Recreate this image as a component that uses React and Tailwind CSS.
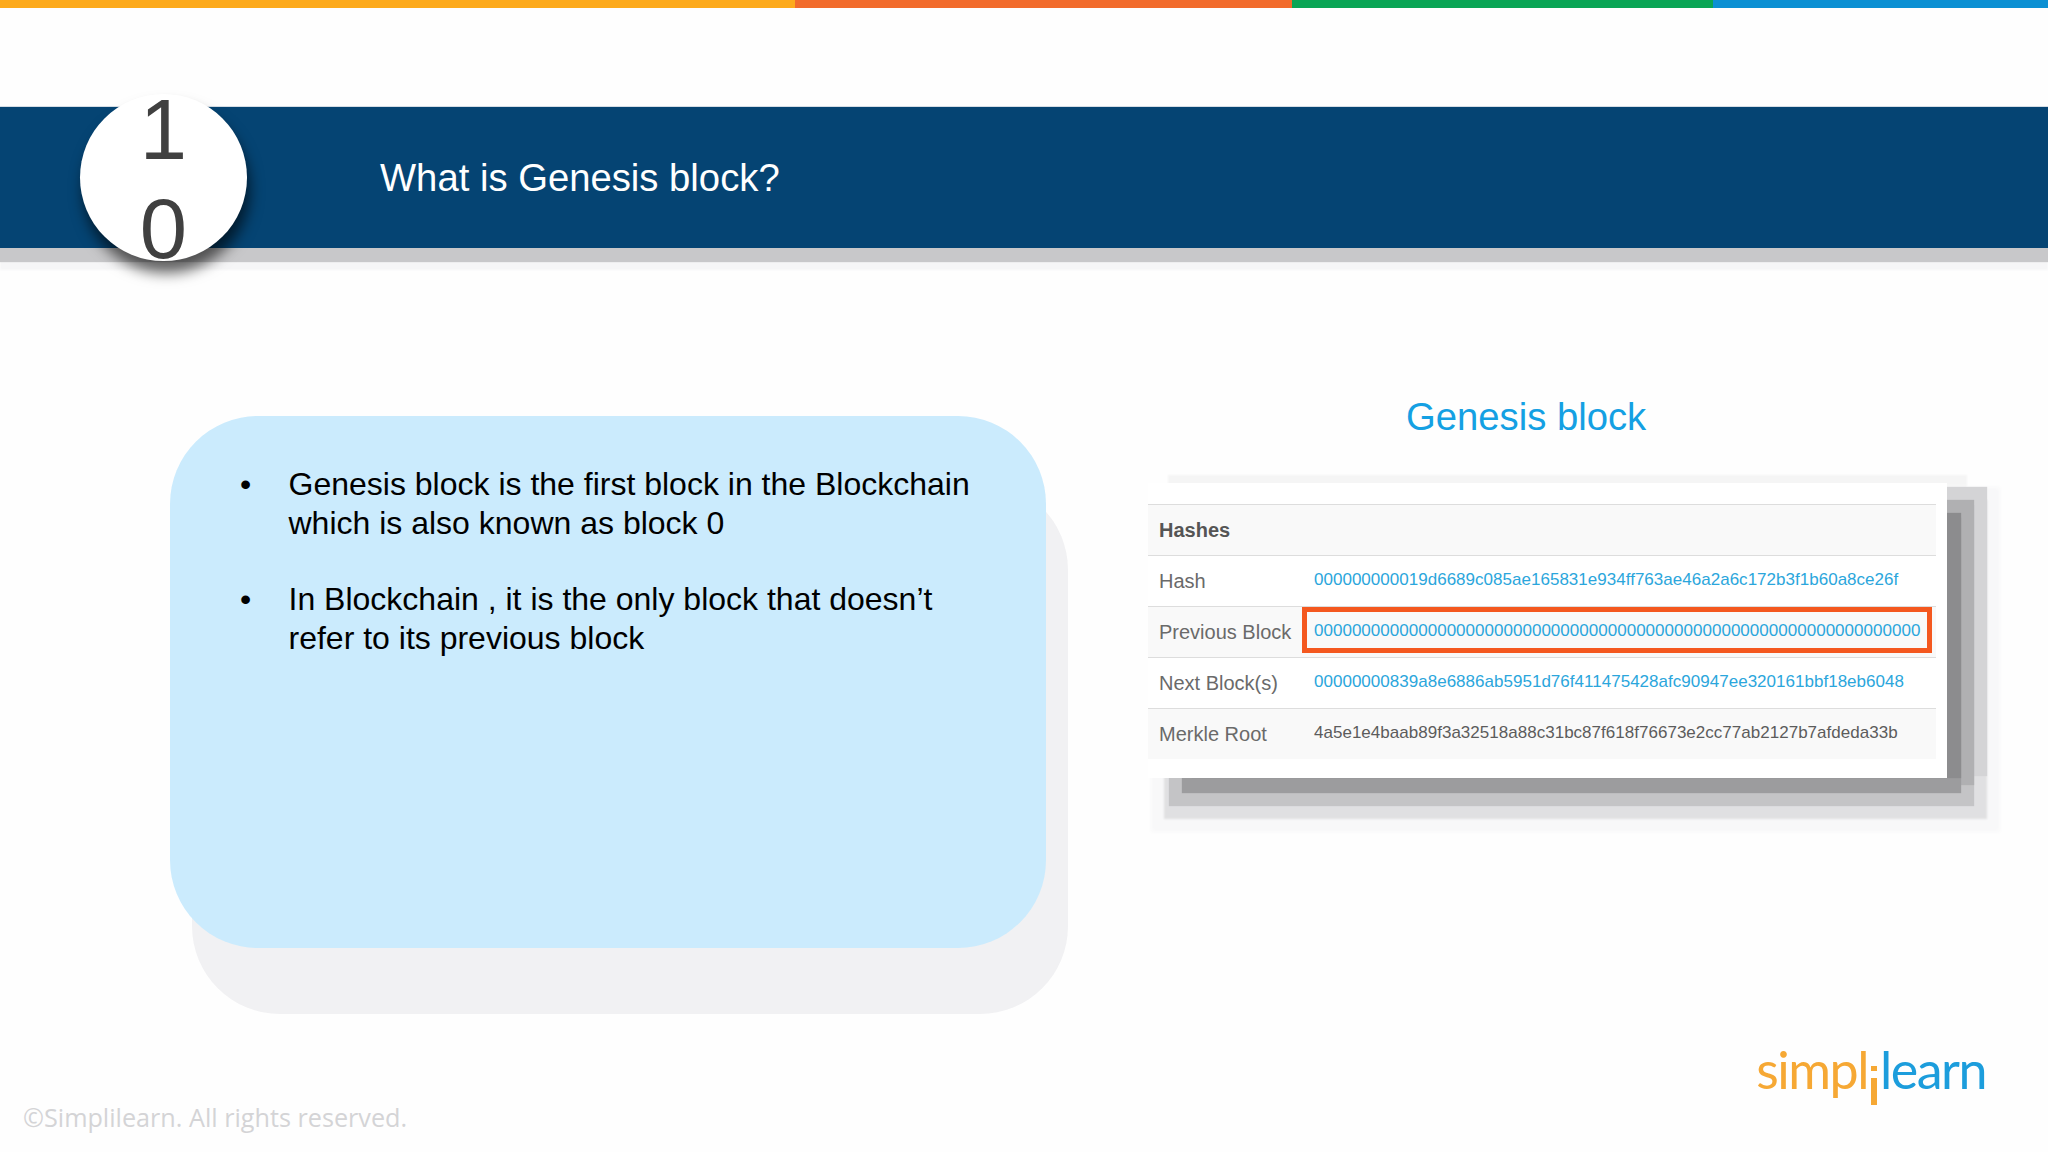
import React from 'react';

const rows = [
  { label: 'Hash', value: '000000000019d6689c085ae165831e934ff763ae46a2a6c172b3f1b60a8ce26f', link: true },
  { label: 'Previous Block', value: '0000000000000000000000000000000000000000000000000000000000000000', link: true, alt: true, boxed: true },
  { label: 'Next Block(s)', value: '00000000839a8e6886ab5951d76f411475428afc90947ee320161bbf18eb6048', link: true },
  { label: 'Merkle Root', value: '4a5e1e4baab89f3a32518a88c31bc87f618f76673e2cc77ab2127b7afdeda33b', alt: true },
];

function HashRow({ label, value, link, alt, boxed }) {
  return (
    <div className={`relative flex h-[51px] items-center border-t border-[#dddddd] ${alt ? 'bg-[#f9f9f9]' : 'bg-white'}`}>
      <div className="w-[166px] pl-[11px] text-[20px] text-[#6a6a6a]">{label}</div>
      <div className={`-mt-[3px] text-[17px] tracking-[0.02px] ${link ? 'text-[#2ba6dc]' : 'text-[#5c5c5c]'}`}>{value}</div>
      {boxed && <div className="absolute left-[154px] right-[4px] top-0 h-[46px] border-[5px] border-[#f4581f]" />}
    </div>
  );
}

function Logo() {
  return (
    <div className="mb-[32px] flex items-start font-['Lato',sans-serif] text-[52px] leading-[58px] tracking-[-1.5px]">
      <span className="font-normal text-[#f6a834]">simpl</span>
      <div className="mx-[3px] flex flex-col pt-[26px]">
        <div className="h-[5px] w-[6px] bg-[#f6a834]" />
        <div className="mt-[7px] h-[27px] w-[6px] bg-[#f6a834]" />
      </div>
      <span className="font-normal text-[#1c9ddc]">learn</span>
    </div>
  );
}

export default function App() {
  return (
    <div className="flex h-[1152px] w-[2048px] flex-col overflow-hidden bg-[#fefefe] font-['Liberation_Sans',Arial,sans-serif]">
      <div className="flex h-2 w-full">
        <div className="w-[795px] bg-[#fdaa1c]" />
        <div className="w-[497px] bg-[#f26b2c]" />
        <div className="w-[421px] bg-[#0aa555]" />
        <div className="flex-1 bg-[#0c90d3]" />
      </div>

      <div className="relative mt-[98px] flex h-[142px] items-center border-t border-[#d5dde5] bg-[#054473] pl-[380px] shadow-[0_14px_1px_0_#c8c8ca,0_22px_2px_0_#f6f6f7]">
        <h1 className="text-[38.25px] font-normal text-white">What is Genesis block?</h1>
        <div className="absolute left-[80px] top-[-13px] flex h-[167px] w-[167px] items-center justify-center rounded-full bg-white text-center text-[85px] leading-[99px] text-[#404040] shadow-[3px_12px_14px_rgba(0,0,0,0.6)]">
          <span className="mt-[3px]">1<br />0</span>
        </div>
      </div>

      <div className="mt-[168px] flex flex-1 items-start">
        <div className="ml-[170px] h-[532px] w-[876px] rounded-[88px] bg-[#cbebfd] pl-[70px] pt-[49px] text-[32px] leading-[38.6px] text-black shadow-[22px_66px_0_0_#f1f1f3]">
          <div className="flex">
            <span className="w-[48.5px]">•</span>
            <p className="w-[700px]">Genesis block is the first block in the Blockchain which is also known as block 0</p>
          </div>
          <div className="mt-[38px] flex">
            <span className="w-[48.5px]">•</span>
            <p className="w-[700px]">In Blockchain , it is the only block that doesn’t refer to its previous block</p>
          </div>
        </div>

        <div className="ml-[102px] -mt-[21px] w-[799px]">
          <h2 className="ml-[258px] text-[38.25px] font-normal leading-[44px] text-[#14a0e3]">Genesis block</h2>
          <div className="mt-[44px] h-[295px] bg-white pr-[11px] pt-[21px] shadow-[29px_15px_1px_-15px_#8c8c8e,24px_25px_1px_-10px_#9c9c9e,32px_12px_1px_-5px_#b0b0b2,24px_25px_1px_3px_#c4c4c6,43px_1px_1px_-3px_#d4d4d6,28px_29px_2px_12px_#e0e0e2,28px_29px_4px_25px_#f8f8f9,20px_-8px_2px_0_#f5f5f5]">
            <div className="flex h-[51px] items-center border-t border-[#dddddd] bg-[#f9f9f9] pl-[11px] text-[20px] font-bold text-[#555555]">Hashes</div>
            {rows.map((row) => (
              <HashRow key={row.label} {...row} />
            ))}
          </div>
        </div>
      </div>

      <div className="flex items-end justify-between pb-[15px] pl-[23px] pr-[62px]">
        <span className="font-['Open_Sans',sans-serif] text-[25.2px] text-[#d4d4d6]">©Simplilearn. All rights reserved.</span>
        <Logo />
      </div>
    </div>
  );
}
